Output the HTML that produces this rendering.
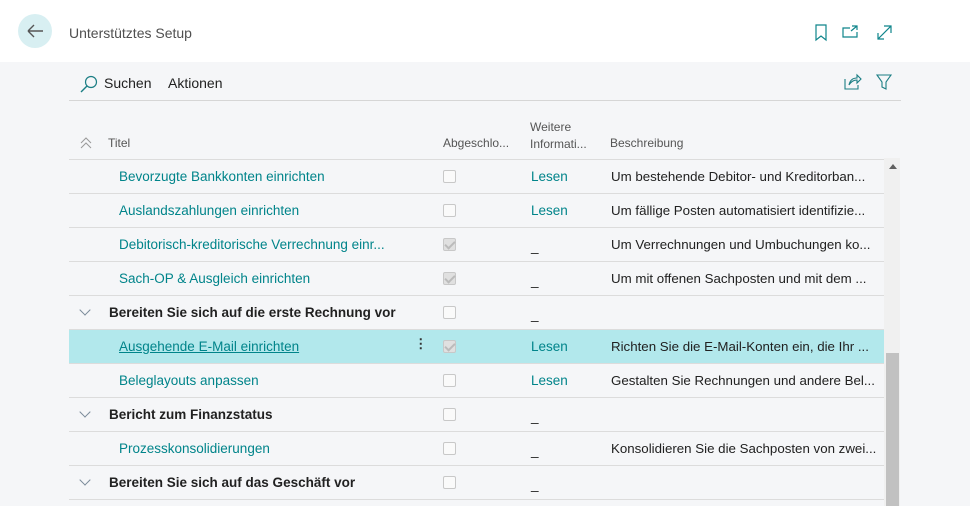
<!DOCTYPE html>
<html><head><meta charset="utf-8"><style>
*{margin:0;padding:0;box-sizing:border-box}
html,body{width:970px;height:506px;overflow:hidden}
body{background:#f5f6f8;font-family:"Liberation Sans",sans-serif;font-size:13.5px;color:#212121;position:relative}
.top{position:absolute;left:0;top:0;width:970px;height:62px;background:#fff}
.back{position:absolute;left:18px;top:14px;width:34px;height:34px;border-radius:50%;background:#d8eff2}
.title{position:absolute;left:69px;top:25px;font-size:14px;color:#505050}
.bar{position:absolute;left:69px;top:100px;width:832px;height:1px;background:#d6d6d6}
.t,.row span{position:absolute;white-space:nowrap}
.row{position:absolute;left:69px;width:815px;height:34px;border-top:1px solid #dcdcdc}
.row.sel{background:#b2e8ec}
.cb{position:absolute;left:374px;top:10px;width:13px;height:13px;border:1px solid #c8c8c8;border-radius:2px;background:#fafafa}
.cb.chk{background:#e0e0e0}
.cb.chk:after{content:"";position:absolute;left:3px;top:0px;width:4px;height:8px;border:solid #bbb;border-width:0 2px 2px 0;transform:rotate(45deg)}
.ti{left:50px;top:9px;color:#00848a}
.hd{left:40px;top:9px;font-weight:bold;color:#212121;font-size:13.5px}
.more{left:462px;top:9px;color:#00848a}
.dash{left:462px;top:11px;color:#212121}
.desc{left:542px;top:9px;color:#212121;font-size:13.3px}
.chev{position:absolute;left:12px;top:10px;width:8px;height:8px;border:solid #7a8a99;border-width:0 1px 1px 0;transform:rotate(45deg)}
</style></head><body>
<div class="top"></div>
<div class="back"><svg width="34" height="34" viewBox="0 0 34 34"><path d="M10 17H25M10 17L16 11M10 17L16 23" stroke="#555" stroke-width="1.4" fill="none"/></svg></div>
<div class="title">Unterstütztes Setup</div>
<svg style="position:absolute;left:812px;top:24px" width="80" height="18" viewBox="0 0 80 18"><path d="M4 1H14V16L9 12L4 16Z" stroke="#0f858b" fill="none" stroke-width="1.2"/><path d="M38 4H31V13H45V8M40 2H45V6M45 2L39 7" stroke="#0f858b" fill="none" stroke-width="1.2"/><path d="M66 15L79 2M72 2H79V9M66 9V15H72" stroke="#0f858b" fill="none" stroke-width="1.2"/></svg>
<svg style="position:absolute;left:80px;top:75px" width="18" height="18" viewBox="0 0 18 18"><circle cx="11" cy="7" r="5.5" stroke="#1b7e84" fill="none" stroke-width="1.2"/><path d="M7 11L1 17" stroke="#1b7e84" stroke-width="1.4"/></svg>
<div class="t" style="left:104px;top:75px;font-size:14px">Suchen</div>
<div class="t" style="left:168px;top:75px;font-size:14px">Aktionen</div>
<svg style="position:absolute;left:843px;top:73px" width="50" height="18" viewBox="0 0 50 18"><path d="M2 6V16H15V12M6 12C7 7 10 5 14 5V2L18 6L14 10V7C10 7 8 9 6 12Z" stroke="#1b7e84" fill="none" stroke-width="1.1"/><path d="M34 2H48L43 9V16L39 14V9Z" stroke="#1b7e84" fill="none" stroke-width="1.1"/></svg>
<div class="bar"></div>
<svg style="position:absolute;left:80px;top:137px" width="12" height="12" viewBox="0 0 12 12"><path d="M1 6L6 1L11 6M1 11L6 6L11 11" stroke="#999" fill="none"/></svg>
<div class="t" style="left:108px;top:136px;font-size:12px;color:#555">Titel</div>
<div class="t" style="left:443px;top:136px;font-size:12px;color:#555">Abgeschlo...</div>
<div class="t" style="left:530px;top:119px;font-size:12px;color:#555;line-height:17px">Weitere<br>Informati...</div>
<div class="t" style="left:610px;top:136px;font-size:12px;color:#555">Beschreibung</div>
<div class="row" style="top:159px"><span class="ti">Bevorzugte Bankkonten einrichten</span><div class="cb"></div><span class="more">Lesen</span><span class="desc">Um bestehende Debitor- und Kreditorban...</span></div>
<div class="row" style="top:193px"><span class="ti">Auslandszahlungen einrichten</span><div class="cb"></div><span class="more">Lesen</span><span class="desc">Um fällige Posten automatisiert identifizie...</span></div>
<div class="row" style="top:227px"><span class="ti">Debitorisch-kreditorische Verrechnung einr...</span><div class="cb chk"></div><span class="dash">_</span><span class="desc">Um Verrechnungen und Umbuchungen ko...</span></div>
<div class="row" style="top:261px"><span class="ti">Sach-OP &amp; Ausgleich einrichten</span><div class="cb chk"></div><span class="dash">_</span><span class="desc">Um mit offenen Sachposten und mit dem ...</span></div>
<div class="row" style="top:295px"><div class="chev"></div><span class="hd">Bereiten Sie sich auf die erste Rechnung vor</span><div class="cb"></div><span class="dash">_</span></div>
<div class="row sel" style="top:329px"><span class="ti" style="text-decoration:underline">Ausgehende E-Mail einrichten</span><span style="left:345px;top:6px;font-weight:bold;color:#333">⋮</span><div class="cb chk"></div><span class="more">Lesen</span><span class="desc">Richten Sie die E-Mail-Konten ein, die Ihr ...</span></div>
<div class="row" style="top:363px"><span class="ti">Beleglayouts anpassen</span><div class="cb"></div><span class="more">Lesen</span><span class="desc">Gestalten Sie Rechnungen und andere Bel...</span></div>
<div class="row" style="top:397px"><div class="chev"></div><span class="hd">Bericht zum Finanzstatus</span><div class="cb"></div><span class="dash">_</span></div>
<div class="row" style="top:431px"><span class="ti">Prozesskonsolidierungen</span><div class="cb"></div><span class="dash">_</span><span class="desc">Konsolidieren Sie die Sachposten von zwei...</span></div>
<div class="row" style="top:465px"><div class="chev"></div><span class="hd">Bereiten Sie sich auf das Geschäft vor</span><div class="cb"></div><span class="dash">_</span></div>
<div class="row" style="top:499px;height:7px"></div>
<div style="position:absolute;left:884px;top:158px;width:16px;height:348px;background:#f0f0f0"></div>
<div style="position:absolute;left:886px;top:353px;width:13px;height:153px;background:#c1c1c1"></div>
<div style="position:absolute;left:889px;top:164px;width:0;height:0;border-left:4px solid transparent;border-right:4px solid transparent;border-bottom:5px solid #606060"></div>
</body></html>
